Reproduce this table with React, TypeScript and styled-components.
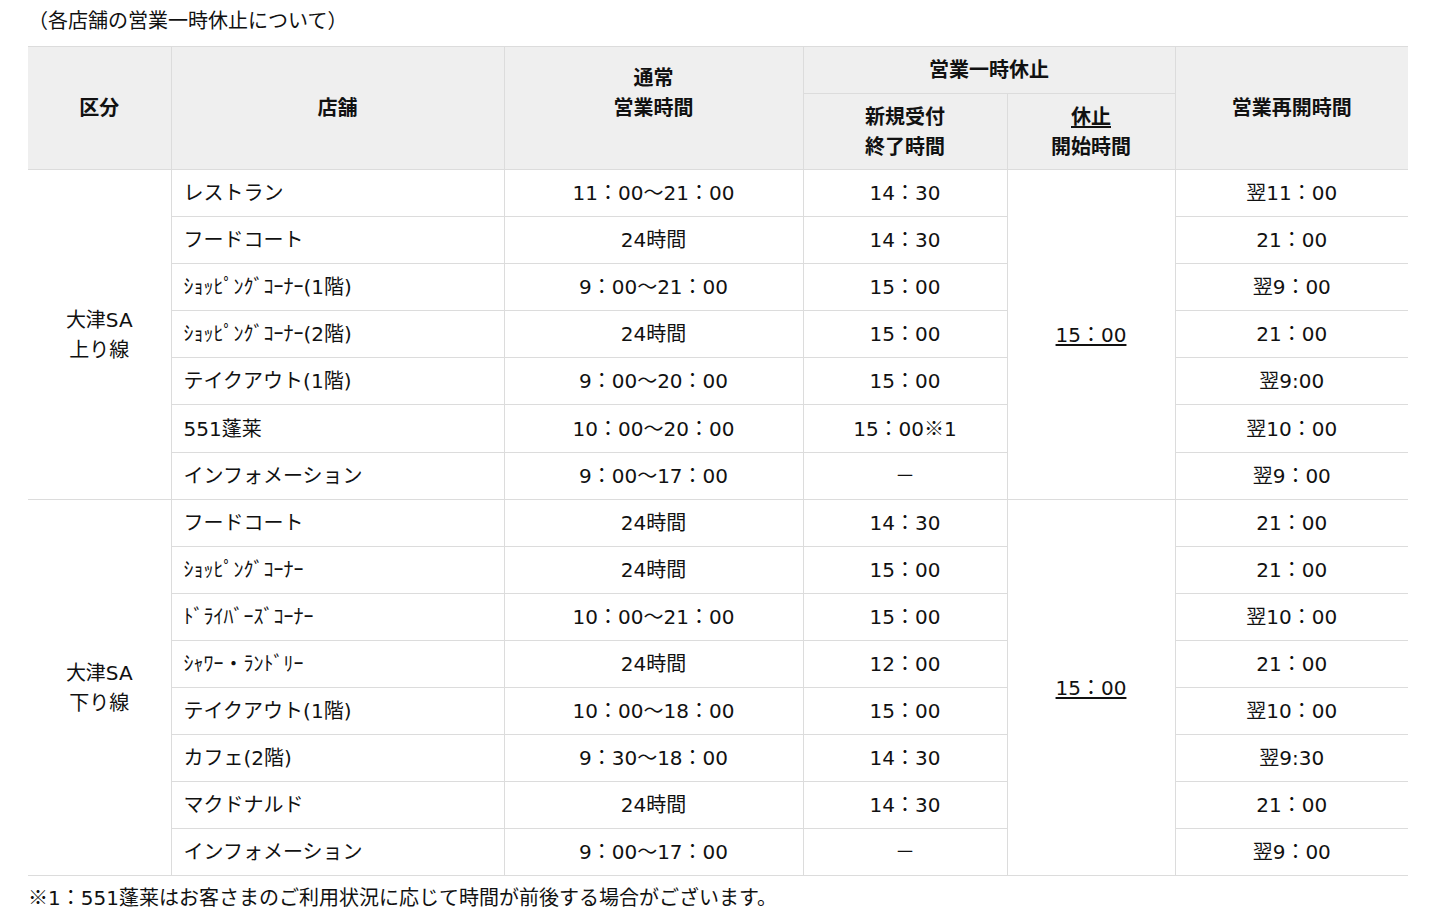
import React from "react";
import styled, { createGlobalStyle, css } from "styled-components";

const GlobalStyle = createGlobalStyle`
  html, body {
    margin: 0;
    padding: 0;
    background: #ffffff;
  }
  body {
    font-family: "DejaVu Sans", "Noto Sans CJK JP", sans-serif;
    color: #111111;
    font-size: 20px;
  }
`;

const Page = styled.div`
  width: 1380px;
  padding: 6px 48px 0 28px;
`;

const Title = styled.p`
  margin: 0 0 10px 0;
  line-height: 30px;
  font-size: 20px;
`;

const Table = styled.table`
  width: 1380px;
  border-collapse: collapse;
  table-layout: fixed;
  border-left: hidden;
  border-right: hidden;
`;

const Col = styled.col<{ $w: number }>`
  width: ${(p) => p.$w}px;
`;

const cellBase = css`
  border: 1px solid #dcdcdc;
  padding: 8px 12px;
  line-height: 30px;
  font-size: 20px;
  vertical-align: middle;
`;

const Th = styled.th<{ $tight?: boolean }>`
  ${cellBase}
  padding: ${(p) => (p.$tight ? "8px 12px 7px" : "8px 12px")};
  background: #efefef;
  font-weight: 700;
  text-align: center;
  color: #111111;
`;

const Td = styled.td<{ $align?: "left" | "center" }>`
  ${cellBase}
  text-align: ${(p) => p.$align ?? "center"};
  font-weight: 400;
  white-space: nowrap;
`;

const U = styled.span`
  text-decoration: underline;
  text-underline-offset: 2px;
`;

const Mark = styled.span`
  font-family: "Noto Sans CJK JP", sans-serif;
`;

const Line = styled.span`
  display: block;
`;

const Note = styled.p`
  margin: 6px 0 0 0;
  line-height: 30px;
  font-size: 20px;
`;

type Row = { shop: string; normal: string; accept: React.ReactNode; reopen: string };

const groups: { area: [string, string]; stop: string; rows: Row[] }[] = [
  {
    area: ["大津SA", "上り線"],
    stop: "15：00",
    rows: [
      { shop: "レストラン", normal: "11：00～21：00", accept: "14：30", reopen: "翌11：00" },
      { shop: "フードコート", normal: "24時間", accept: "14：30", reopen: "21：00" },
      { shop: "ｼｮｯﾋﾟﾝｸﾞｺｰﾅｰ(1階)", normal: "9：00～21：00", accept: "15：00", reopen: "翌9：00" },
      { shop: "ｼｮｯﾋﾟﾝｸﾞｺｰﾅｰ(2階)", normal: "24時間", accept: "15：00", reopen: "21：00" },
      { shop: "テイクアウト(1階)", normal: "9：00～20：00", accept: "15：00", reopen: "翌9:00" },
      {
        shop: "551蓬莱",
        normal: "10：00～20：00",
        accept: (
          <>
            15：00<Mark>※</Mark>1
          </>
        ),
        reopen: "翌10：00",
      },
      { shop: "インフォメーション", normal: "9：00～17：00", accept: "－", reopen: "翌9：00" },
    ],
  },
  {
    area: ["大津SA", "下り線"],
    stop: "15：00",
    rows: [
      { shop: "フードコート", normal: "24時間", accept: "14：30", reopen: "21：00" },
      { shop: "ｼｮｯﾋﾟﾝｸﾞｺｰﾅｰ", normal: "24時間", accept: "15：00", reopen: "21：00" },
      { shop: "ﾄﾞﾗｲﾊﾞｰｽﾞｺｰﾅｰ", normal: "10：00～21：00", accept: "15：00", reopen: "翌10：00" },
      { shop: "ｼｬﾜｰ・ﾗﾝﾄﾞﾘｰ", normal: "24時間", accept: "12：00", reopen: "21：00" },
      { shop: "テイクアウト(1階)", normal: "10：00～18：00", accept: "15：00", reopen: "翌10：00" },
      { shop: "カフェ(2階)", normal: "9：30～18：00", accept: "14：30", reopen: "翌9:30" },
      { shop: "マクドナルド", normal: "24時間", accept: "14：30", reopen: "21：00" },
      { shop: "インフォメーション", normal: "9：00～17：00", accept: "－", reopen: "翌9：00" },
    ],
  },
];

export default function App() {
  return (
    <>
      <GlobalStyle />
      <Page>
        <Title>（各店舗の営業一時休止について）</Title>
        <Table>
          <colgroup>
            <Col $w={143} />
            <Col $w={333} />
            <Col $w={299} />
            <Col $w={204} />
            <Col $w={168} />
            <Col $w={233} />
          </colgroup>
          <thead>
            <tr>
              <Th rowSpan={2}>区分</Th>
              <Th rowSpan={2}>店舗</Th>
              <Th rowSpan={2}>
                <Line>通常</Line>
                <Line>営業時間</Line>
                <Line>&nbsp;</Line>
              </Th>
              <Th colSpan={2}>営業一時休止</Th>
              <Th rowSpan={2}>営業再開時間</Th>
            </tr>
            <tr>
              <Th $tight>
                <Line>新規受付</Line>
                <Line>終了時間</Line>
              </Th>
              <Th $tight>
                <Line>
                  <U>休止</U>
                </Line>
                <Line>開始時間</Line>
              </Th>
            </tr>
          </thead>
          <tbody>
            {groups.map((g, gi) =>
              g.rows.map((r, ri) => (
                <tr key={`${gi}-${ri}`}>
                  {ri === 0 && (
                    <Td rowSpan={g.rows.length}>
                      <Line>{g.area[0]}</Line>
                      <Line>{g.area[1]}</Line>
                    </Td>
                  )}
                  <Td $align="left">{r.shop}</Td>
                  <Td>{r.normal}</Td>
                  <Td>{r.accept}</Td>
                  {ri === 0 && (
                    <Td rowSpan={g.rows.length}>
                      <U>{g.stop}</U>
                    </Td>
                  )}
                  <Td>{r.reopen}</Td>
                </tr>
              ))
            )}
          </tbody>
        </Table>
        <Note>
          <Mark>※</Mark>1：551蓬莱はお客さまのご利用状況に応じて時間が前後する場合がございます。
        </Note>
      </Page>
    </>
  );
}
